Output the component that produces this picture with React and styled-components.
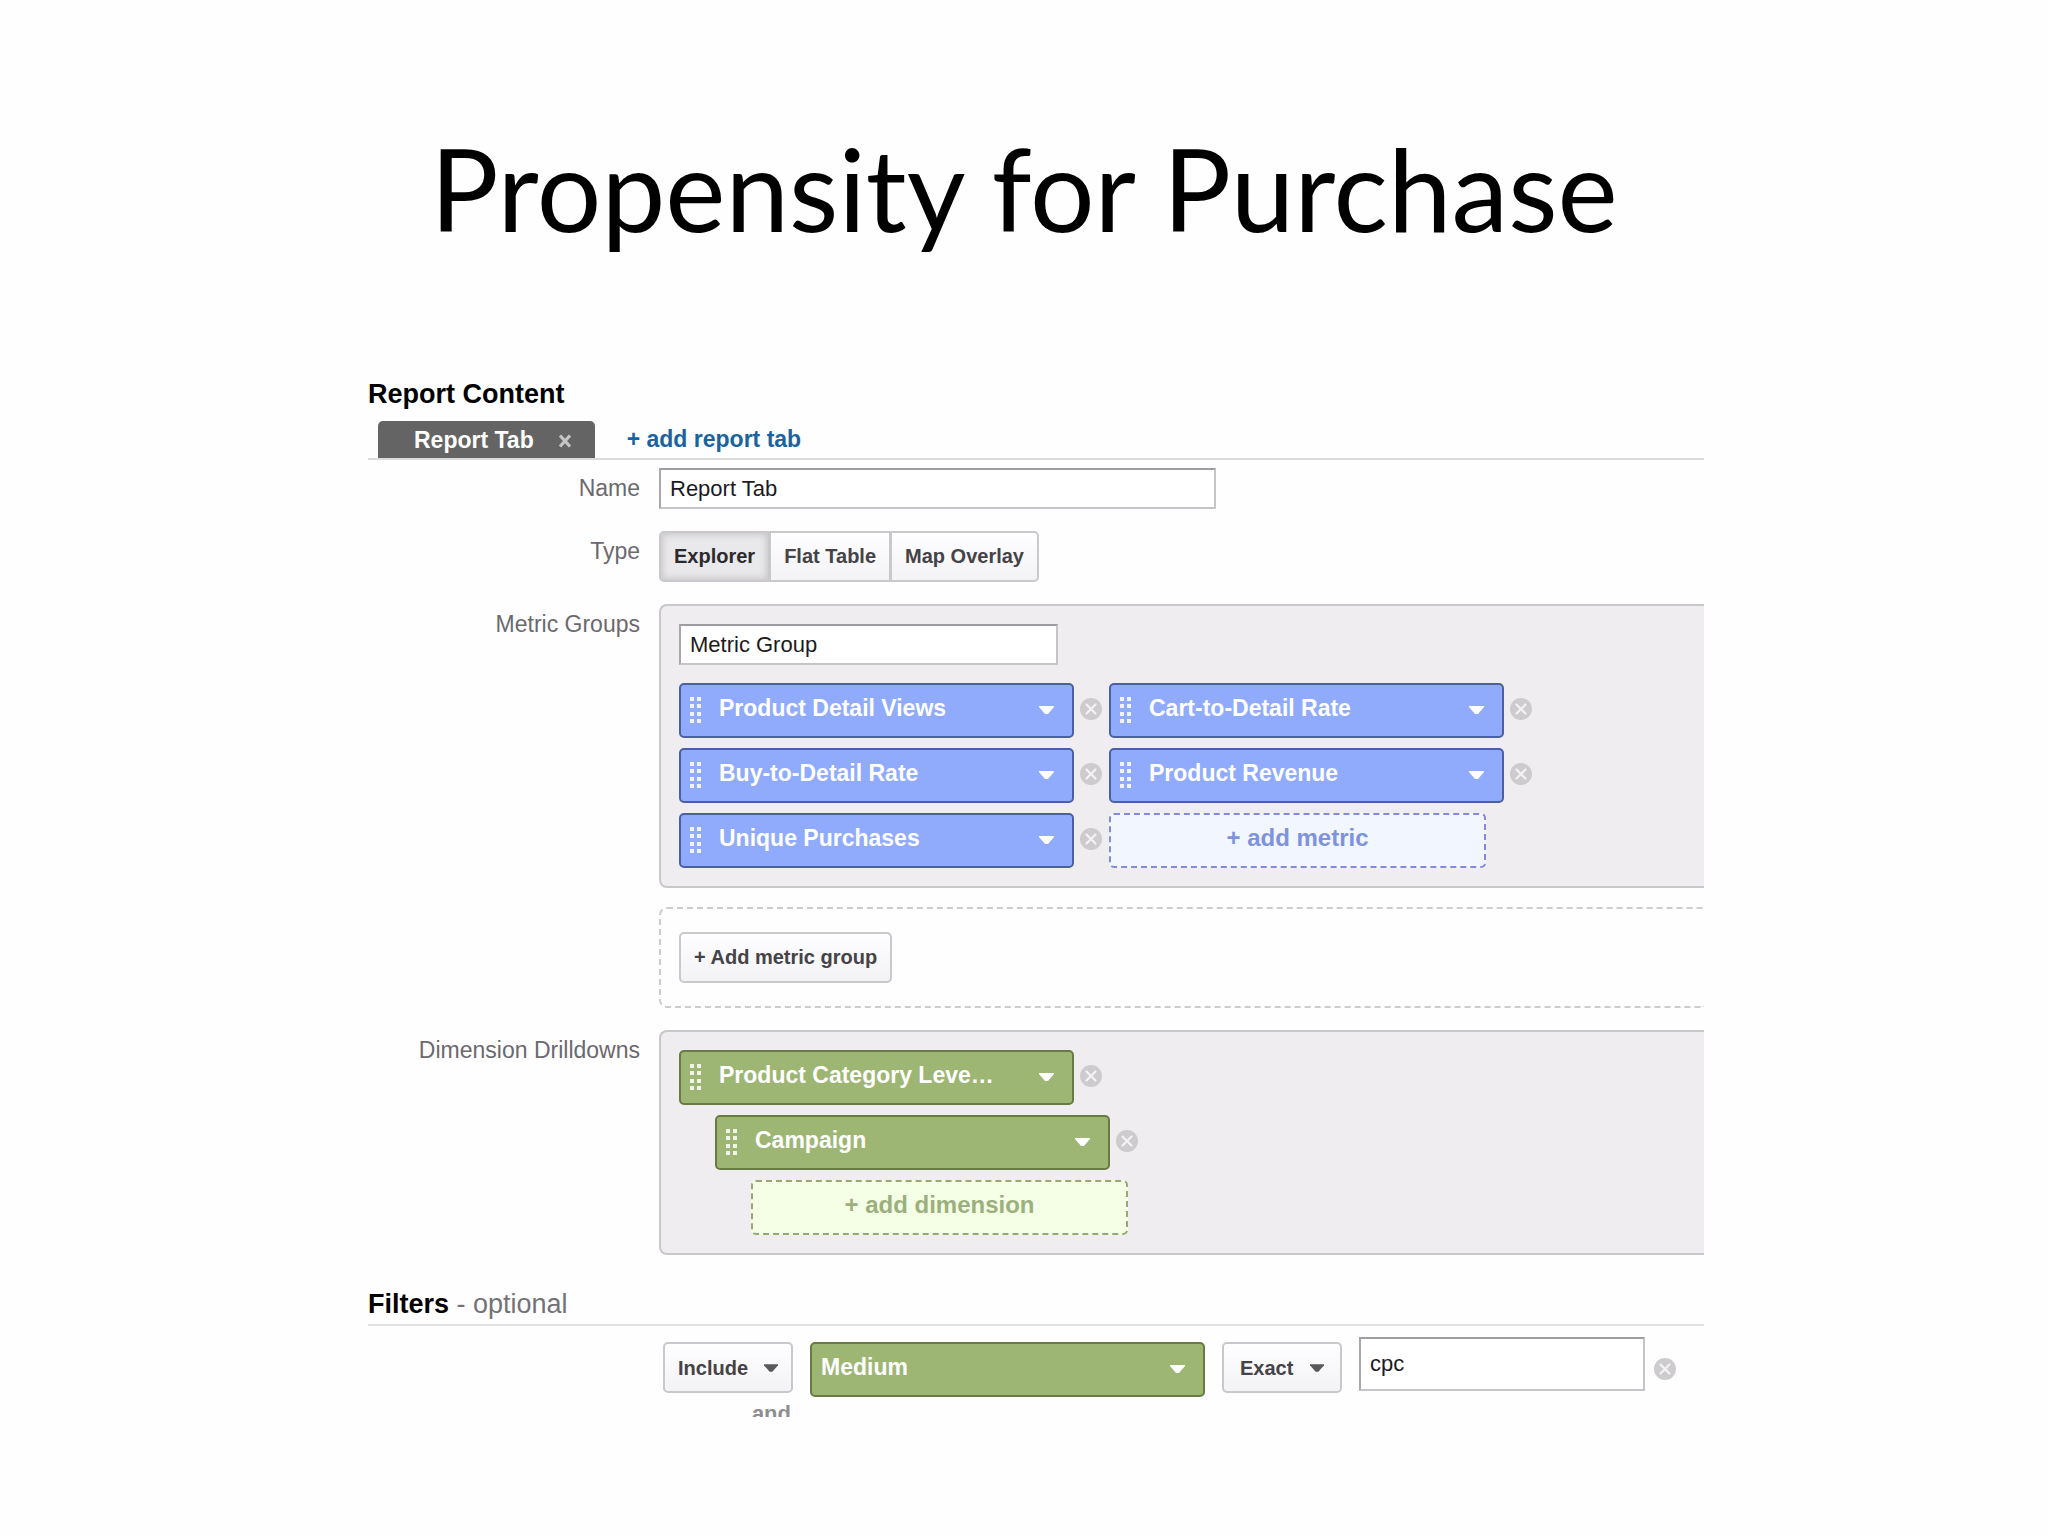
import React, { useState } from "react";
import styled, { createGlobalStyle } from "styled-components";

const METRICS = [
  "Product Detail Views",
  "Cart-to-Detail Rate",
  "Buy-to-Detail Rate",
  "Product Revenue",
  "Unique Purchases",
];
const DIMENSIONS = ["Product Category Leve…", "Campaign"];
const TYPES = ["Explorer", "Flat Table", "Map Overlay"];

const GRIP_ROWS = [0, 7, 15, 22];

const GripIcon = () => (
  <svg width="11" height="26" viewBox="0 0 11 26" aria-hidden="true">
    {GRIP_ROWS.map((y) => (
      <g key={y} fill="#ffffff" fillOpacity="0.85">
        <rect x="0" y={y} width="4" height="4" />
        <rect x="7" y={y} width="4" height="4" />
      </g>
    ))}
  </svg>
);

const CaretIcon = ({ size = 15, color = "#ffffff" }) => (
  <svg width={size} height="8" viewBox="0 0 15 8" aria-hidden="true">
    <path d="M0 0h15v1L9 8H6L0 1z" fill={color} />
  </svg>
);

const RemoveButton = ({ label }) => (
  <Remove type="button" aria-label={`Remove ${label}`}>
    <svg width="22" height="22" viewBox="0 0 22 22" aria-hidden="true">
      <circle cx="11" cy="11" r="11" fill="#cdcbce" />
      <path
        d="M6.5 6.5l9 9M15.5 6.5l-9 9"
        stroke="#f4f3f4"
        strokeWidth="2.2"
        strokeLinecap="round"
      />
    </svg>
  </Remove>
);

const Chip = ({ name, color, indent }) => (
  <ChipRow $indent={indent}>
    <Pill $color={color}>
      <GripIcon />
      <PillSelect aria-label={name} defaultValue={name} $inset={18}>
        <option>{name}</option>
      </PillSelect>
      <CaretIcon />
    </Pill>
    <RemoveButton label={name} />
  </ChipRow>
);

export default function App() {
  const [type, setType] = useState("Explorer");

  return (
    <Page>
      <GlobalStyle />
      <Title>Propensity for Purchase</Title>

      <Report>
        <Heading>Report Content</Heading>
        <TabBar>
          <Tab>
            Report Tab
            <TabClose type="button" aria-label="Close Report Tab">
              <svg width="14" height="14" viewBox="0 0 14 14">
                <path
                  d="M2 1.5l10 11M12 1.5l-10 11"
                  stroke="#c6c4c6"
                  strokeWidth="3.2"
                />
              </svg>
            </TabClose>
          </Tab>
          <AddTab href="#add">+ add report tab</AddTab>
        </TabBar>

        <Form>
          <Label htmlFor="name">Name</Label>
          <TextInput id="name" defaultValue="Report Tab" $width={557} />

          <Label as="span" id="type">
            Type
          </Label>
          <Segments role="group" aria-labelledby="type">
            {TYPES.map((item) => (
              <Segment
                key={item}
                type="button"
                aria-pressed={type === item}
                $active={type === item}
                onClick={() => setType(item)}
              >
                {item}
              </Segment>
            ))}
          </Segments>

          <Label htmlFor="metric-group">Metric Groups</Label>
          <Groups>
            <Panel>
              <TextInput
                id="metric-group"
                defaultValue="Metric Group"
                $width={379}
              />
              <MetricGrid>
                {METRICS.map((name) => (
                  <Chip key={name} name={name} color="blue" />
                ))}
                <AddSlot type="button" $color="blue">
                  + add metric
                </AddSlot>
              </MetricGrid>
            </Panel>
            <DashedPanel>
              <Button type="button">+ Add metric group</Button>
            </DashedPanel>
          </Groups>

          <Label as="span">Dimension Drilldowns</Label>
          <Panel>
            <Drilldowns>
              {DIMENSIONS.map((name, i) => (
                <Chip key={name} name={name} color="green" indent={i * 36} />
              ))}
              <AddSlot type="button" $color="green" $indent={72}>
                + add dimension
              </AddSlot>
            </Drilldowns>
          </Panel>
        </Form>

        <FiltersHead>
          <Heading>
            Filters <Optional>- optional</Optional>
          </Heading>
        </FiltersHead>
        <FilterRow>
          <FilterControls>
            <SelectBox $pad={13}>
              <PlainSelect aria-label="Include or exclude" $width={86}>
                <option>Include</option>
              </PlainSelect>
              <CaretIcon size={14} color="#5a585c" />
            </SelectBox>
            <Pill $color="green">
              <PillSelect aria-label="Filter dimension" $inset={0}>
                <option>Medium</option>
              </PillSelect>
              <CaretIcon />
            </Pill>
            <SelectBox $pad={16}>
              <PlainSelect aria-label="Match type" $width={70}>
                <option>Exact</option>
              </PlainSelect>
              <CaretIcon size={14} color="#5a585c" />
            </SelectBox>
          </FilterControls>
          <TextInput
            aria-label="Filter value"
            defaultValue="cpc"
            $width={286}
            $tall
          />
          <FilterRemove>
            <RemoveButton label="filter" />
          </FilterRemove>
        </FilterRow>
        <Joiner>and</Joiner>
      </Report>
    </Page>
  );
}

const COLORS = {
  blue: {
    fill: "#90abfb",
    line: "#4a60a3",
    slot: "#f1f6ff",
    dash: "#8389dc",
    text: "#7f93dd",
  },
  green: {
    fill: "#9db674",
    line: "#687b45",
    slot: "#f4ffe6",
    dash: "#98a873",
    text: "#9bb07d",
  },
};

const GlobalStyle = createGlobalStyle`
  * {
    box-sizing: border-box;
  }

  body {
    margin: 0;
    background: #fefefe;
  }

  button,
  input,
  select {
    margin: 0;
    font-family: inherit;
  }

  svg {
    display: block;
    flex: none;
  }
`;

const Page = styled.main`
  padding: 122px 0 40px;
  font-family: "Liberation Sans", Arial, sans-serif;
  color: #000000;
`;

const Title = styled.h1`
  margin: 0 0 124px;
  font-family: Lato, sans-serif;
  font-size: 114px;
  font-weight: 400;
  line-height: 132px;
  text-align: center;
`;

const Report = styled.section`
  padding: 0 344px 0 368px;
`;

const Heading = styled.h2`
  margin: 0;
  font-size: 27px;
  line-height: 32px;
`;

const Optional = styled.span`
  font-weight: 400;
  color: #747277;
`;

const TabBar = styled.div`
  display: flex;
  margin-top: 11px;
  padding-left: 10px;
  border-bottom: 2px solid #dcdadd;
  font-size: 23px;
  font-weight: bold;
  line-height: 36px;
`;

const Tab = styled.div`
  display: flex;
  align-items: center;
  gap: 24px;
  height: 37px;
  padding: 0 23px 0 36px;
  border-radius: 5px 5px 0 0;
  background: #656465;
  color: #ffffff;
`;

const TabClose = styled.button`
  padding: 2px 0 0;
  border: 0;
  background: none;
`;

const AddTab = styled.a`
  margin-left: 32px;
  color: #1a639e;
  text-decoration: none;
`;

const Form = styled.div`
  display: grid;
  grid-template-columns: 272px 1fr;
  gap: 22px 19px;
  align-items: start;
  margin-top: 8px;
`;

const Label = styled.label`
  padding-top: 6px;
  font-size: 23px;
  line-height: 28px;
  text-align: right;
  color: #6b696e;
`;

const TextInput = styled.input`
  display: block;
  width: ${(props) => props.$width}px;
  height: ${(props) => (props.$tall ? 54 : 41)}px;
  padding: 0 9px;
  border: 2px solid;
  border-color: #9f9da1 #c6c4c8 #c6c4c8 #a9a7ac;
  border-radius: 0;
  background: #ffffff;
  font-size: 22px;
  color: #1c1a1e;
`;

const Segments = styled.div`
  display: flex;
`;

const Button = styled.button`
  height: 51px;
  padding: 0 13px;
  border: 2px solid #cac8cc;
  border-radius: 5px;
  background: linear-gradient(#fefdff, #f3f2f4);
  font-size: 20px;
  font-weight: bold;
  color: #454347;
`;

const Segment = styled(Button)`
  border-radius: 0;

  & + & {
    margin-left: -1px;
  }

  &:first-child {
    border-radius: 5px 0 0 5px;
  }

  &:last-child {
    border-radius: 0 5px 5px 0;
  }

  ${(props) =>
    props.$active &&
    `
    background: #e9e8ea;
    box-shadow: inset 0 0 6px 2px #c9c7cb;
    color: #2c2a2e;
  `}
`;

const Groups = styled.div`
  display: grid;
  gap: 19px;
`;

const Panel = styled.div`
  padding: 18px;
  border: 2px solid #c9c7cb;
  border-right: 0;
  border-radius: 8px 0 0 8px;
  background: #efedef;
`;

const DashedPanel = styled.div`
  padding: 23px 18px;
  border: 2px dashed #cfccd0;
  border-right: 0;
  border-radius: 8px 0 0 8px;
`;

const MetricGrid = styled.div`
  display: grid;
  grid-template-columns: repeat(2, 430px);
  gap: 10px 0;
  margin-top: 18px;
`;

const Drilldowns = styled.div`
  display: grid;
  gap: 10px;
`;

const ChipRow = styled.div`
  display: flex;
  align-items: center;
  gap: 6px;
  margin-left: ${(props) => props.$indent || 0}px;
`;

const Pill = styled.div`
  display: flex;
  align-items: center;
  width: 395px;
  height: 55px;
  padding: 0 18px 2px 9px;
  border: 2px solid ${(props) => COLORS[props.$color].line};
  border-radius: 5px;
  background: ${(props) => COLORS[props.$color].fill};
`;

const PillSelect = styled.select`
  flex: 1;
  min-width: 0;
  height: 49px;
  padding: 0 0 3px ${(props) => props.$inset}px;
  border: 0;
  appearance: none;
  background: none;
  font-size: 23px;
  font-weight: bold;
  color: #ffffff;

  option {
    color: #000000;
  }
`;

const Remove = styled.button`
  flex: none;
  padding: 0 0 4px;
  border: 0;
  background: none;
`;

const AddSlot = styled.button`
  width: 377px;
  height: 55px;
  margin-left: ${(props) => props.$indent || 0}px;
  padding: 0 0 5px;
  border: 2px dashed ${(props) => COLORS[props.$color].dash};
  border-radius: 5px;
  background: ${(props) => COLORS[props.$color].slot};
  font-size: 24px;
  font-weight: bold;
  color: ${(props) => COLORS[props.$color].text};
`;

const FiltersHead = styled.div`
  margin-top: 33px;
  padding-bottom: 4px;
  border-bottom: 2px solid #e3e1e4;
`;

const FilterRow = styled.div`
  display: flex;
  align-items: flex-start;
  margin-left: 295px;
  padding-top: 11px;
`;

const FilterControls = styled.div`
  display: flex;
  align-items: flex-start;
  gap: 17px;
  padding: 5px 17px 0 0;
`;

const FilterRemove = styled.div`
  display: flex;
  align-items: center;
  align-self: stretch;
  padding: 8px 0 0 9px;
`;

const SelectBox = styled.div`
  display: flex;
  align-items: center;
  height: 51px;
  padding: 0 ${(props) => props.$pad}px;
  border: 2px solid #cac8cc;
  border-radius: 5px;
  background: linear-gradient(#fefdff, #f3f2f4);
`;

const PlainSelect = styled.select`
  width: ${(props) => props.$width}px;
  height: 47px;
  padding: 0;
  border: 0;
  appearance: none;
  background: none;
  font-size: 20px;
  font-weight: bold;
  color: #454347;
`;

/* only the top of the next row's joiner shows at the cut edge */
const Joiner = styled.div`
  width: 423px;
  height: 20px;
  overflow: hidden;
  font-size: 22px;
  font-weight: bold;
  line-height: 34px;
  text-align: right;
  color: #8f8d92;
`;
